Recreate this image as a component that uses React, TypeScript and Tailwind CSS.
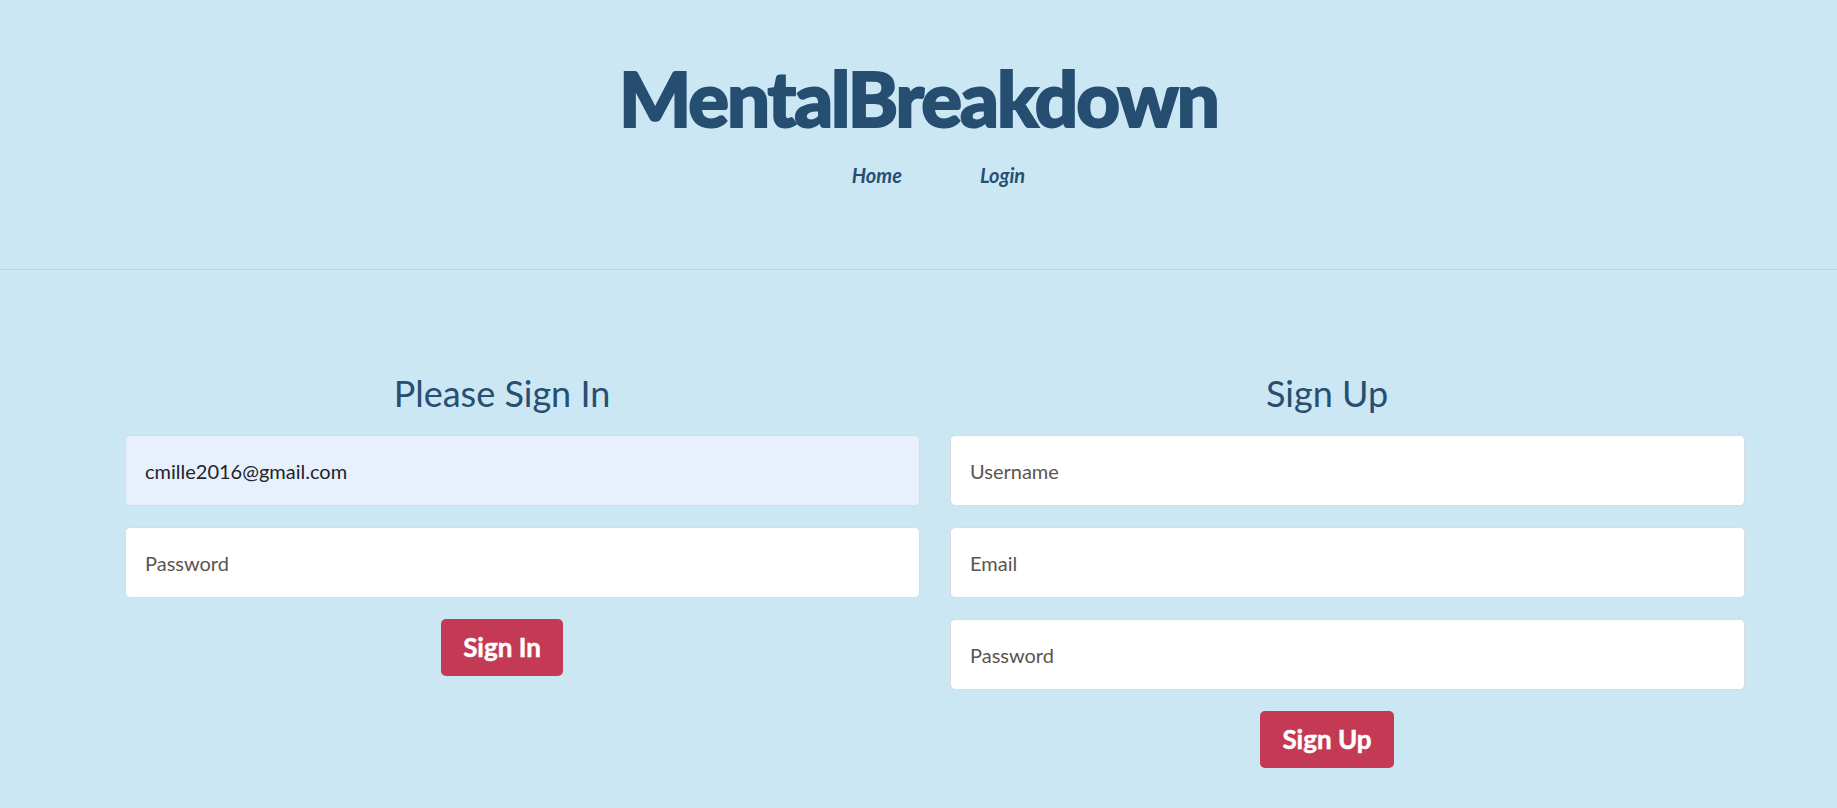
import { useState } from 'react'

const font = { fontFamily: 'Lato, "Noto Sans", sans-serif' }

function Field({ placeholder, value, type = 'text' }: { placeholder: string; value?: string; type?: string }) {
  const [v, setV] = useState(value ?? '')
  return (
    <input
      type={type}
      placeholder={placeholder}
      value={v}
      onChange={e => setV(e.target.value)}
      className={`block w-full h-[71px] rounded-[5px] border border-[#d6dde2] px-[19px] text-[20px] text-[#212529] placeholder:text-[#5c5450] outline-none ${
        value ? 'bg-[#e8f0fe]' : 'bg-white'
      }`}
      style={font}
    />
  )
}

function Column({ title, button, children }: { title: string; button: string; children: React.ReactNode }) {
  return (
    <div className="w-[795px]">
      <div className="w-[754px] text-center">
        <h2 className="text-[36px] leading-[44px] text-[#264f72] mb-[20px]" style={font}>{title}</h2>
      </div>
      <div className="flex flex-col gap-[21px]">{children}</div>
      <div className="w-[754px] flex justify-center mt-[21px]">
        <button
          className="h-[57px] px-[22px] rounded-[5px] bg-[#c43a55] text-white text-[26px] font-bold [-webkit-text-stroke:0.5px_white]"
          style={font}
        >
          {button}
        </button>
      </div>
    </div>
  )
}

export default function App() {
  return (
    <div className="min-h-[808px] bg-[#cce7f4]">
      <header className="border-b border-[#bfd0d9] h-[270px] pt-[56px]">
        <h1
          className="text-center text-[76px] leading-[84px] font-black tracking-[-2px] text-[#254e71] [-webkit-text-stroke:2px_#254e71]"
          style={font}
        >
          MentalBreakdown
        </h1>
        <ul className="flex justify-center gap-[78px] pl-10 mt-[20px]">
          <li>
            <a className="italic font-bold text-[20px] text-[#264f72]" style={font}>Home</a>
          </li>
          <li>
            <a className="italic font-bold text-[20px] text-[#264f72]" style={font}>Login</a>
          </li>
        </ul>
      </header>

      <main className="flex gap-[30px] pl-[125px] pt-[101px] pb-10">
        <Column title="Please Sign In" button="Sign In">
          <Field placeholder="Email" value="cmille2016@gmail.com" />
          <Field placeholder="Password" type="password" />
        </Column>
        <Column title="Sign Up" button="Sign Up">
          <Field placeholder="Username" />
          <Field placeholder="Email" />
          <Field placeholder="Password" type="password" />
        </Column>
      </main>
    </div>
  )
}
